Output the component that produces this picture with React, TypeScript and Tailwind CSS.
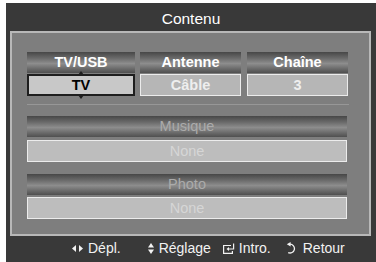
import React from "react";

const bar =
  "bg-[linear-gradient(to_bottom,#474747_0%,#686868_28%,#8d8d8d_55%,#6a6a6a_80%,#4f4f4f_100%)]";

function Header({ label, dim }: { label: string; dim?: boolean }) {
  return (
    <div
      className={`h-[21px] flex items-center justify-center ${bar} ${
        dim ? "text-[#ababab] font-normal" : "text-white font-bold"
      } text-[14.5px] leading-none`}
    >
      {label}
    </div>
  );
}

function Value({ label, active, dim }: { label: string; active?: boolean; dim?: boolean }) {
  if (active) {
    return (
      <div className="relative h-[22px] flex items-center justify-center bg-[#c8c8c8] border-2 border-[#1e1e1e] text-black font-bold text-[14.5px] leading-none">
        {label}
        {/* petites flèches haut / bas */}
        <span className="absolute left-1/2 -translate-x-1/2 -top-[5px] w-0 h-0 border-x-[3px] border-x-transparent border-b-[4px] border-b-[#1e1e1e]" />
        <span className="absolute left-1/2 -translate-x-1/2 -bottom-[5px] w-0 h-0 border-x-[3px] border-x-transparent border-t-[4px] border-t-[#1e1e1e]" />
      </div>
    );
  }
  return (
    <div
      className={`h-[22px] flex items-center justify-center border border-[#ececec] text-[14.5px] leading-none ${
        dim ? "bg-[#bdbdbd] text-[#d6d6d6] font-normal" : "bg-[#b6b6b6] text-[#eeeeee] font-bold"
      }`}
    >
      {label}
    </div>
  );
}

function Footer() {
  return (
    <div className="flex-1 flex items-center text-[14px] text-[#f2f2f2] pb-[2px]">
      <div className="ml-[66px] flex items-center gap-[5px]">
        <svg width="11" height="7" viewBox="0 0 11 7">
          <polygon points="0,3.5 4,0 4,7" fill="#f2f2f2" />
          <polygon points="11,3.5 7,0 7,7" fill="#f2f2f2" />
        </svg>
        <span>Dépl.</span>
      </div>
      <div className="ml-[27px] flex items-center gap-[5px]">
        <svg width="6" height="11" viewBox="0 0 6 11">
          <polygon points="3,0 0,4.5 6,4.5" fill="#f2f2f2" />
          <polygon points="0,6.5 6,6.5 3,11" fill="#f2f2f2" />
        </svg>
        <span>Réglage</span>
      </div>
      <div className="ml-[12px] flex items-center gap-[4px]">
        <svg width="12" height="11" viewBox="0 0 12 11" fill="none" stroke="#f2f2f2" strokeWidth="1.2">
          <path d="M8 2.5H0.6V10.4H9.4V8" />
          <path d="M10.6 0.5V6H5" />
          <polygon points="3.5,6 6,4 6,8" fill="#f2f2f2" stroke="none" />
        </svg>
        <span>Intro.</span>
      </div>
      <div className="ml-[14px] flex items-center gap-[6px]">
        <svg width="12" height="12" viewBox="0 0 12 12" fill="none" stroke="#f2f2f2" strokeWidth="1.3">
          <path d="M5 2.2A4.4 4.4 0 1 1 3.2 10.6" />
          <polygon points="1.8,2.2 5.6,0 5.6,4.4" fill="#f2f2f2" stroke="none" />
        </svg>
        <span>Retour</span>
      </div>
    </div>
  );
}

export default function App() {
  return (
    <div className="w-[376px] h-[262px] bg-white pt-[3px] pl-[6px] overflow-hidden font-['Liberation_Sans',Arial,sans-serif]">
      <div className="h-[259px] bg-[#393939] flex flex-col">
        {/* Titre */}
        <div className="h-[28px] flex items-center justify-center pt-[3px] text-[15.5px] text-white">
          Contenu
        </div>

        {/* Panneau */}
        <div className="ml-[4px] w-[361px] h-[205px] bg-[#7e7e7e] border-2 border-[#b8b8b8] pl-[15px] pt-[19px]">
          <div className="flex gap-[5px]">
            <div className="w-[108px] flex flex-col gap-[1px]">
              <Header label="TV/USB" />
              <Value label="TV" active />
            </div>
            <div className="w-[101px] flex flex-col gap-[1px]">
              <Header label="Antenne" />
              <Value label="Câble" />
            </div>
            <div className="w-[101px] ml-[1px] flex flex-col gap-[1px]">
              <Header label="Chaîne" />
              <Value label="3" />
            </div>
          </div>

          <div className="mt-[8px] w-[322px] h-px bg-[#979797]" />

          <div className="mt-[11px] w-[320px] flex flex-col gap-[3px]">
            <Header label="Musique" dim />
            <Value label="None" dim />
          </div>

          <div className="mt-[12px] w-[320px] flex flex-col gap-[2px]">
            <Header label="Photo" dim />
            <Value label="None" dim />
          </div>
        </div>

        <Footer />
      </div>
    </div>
  );
}
